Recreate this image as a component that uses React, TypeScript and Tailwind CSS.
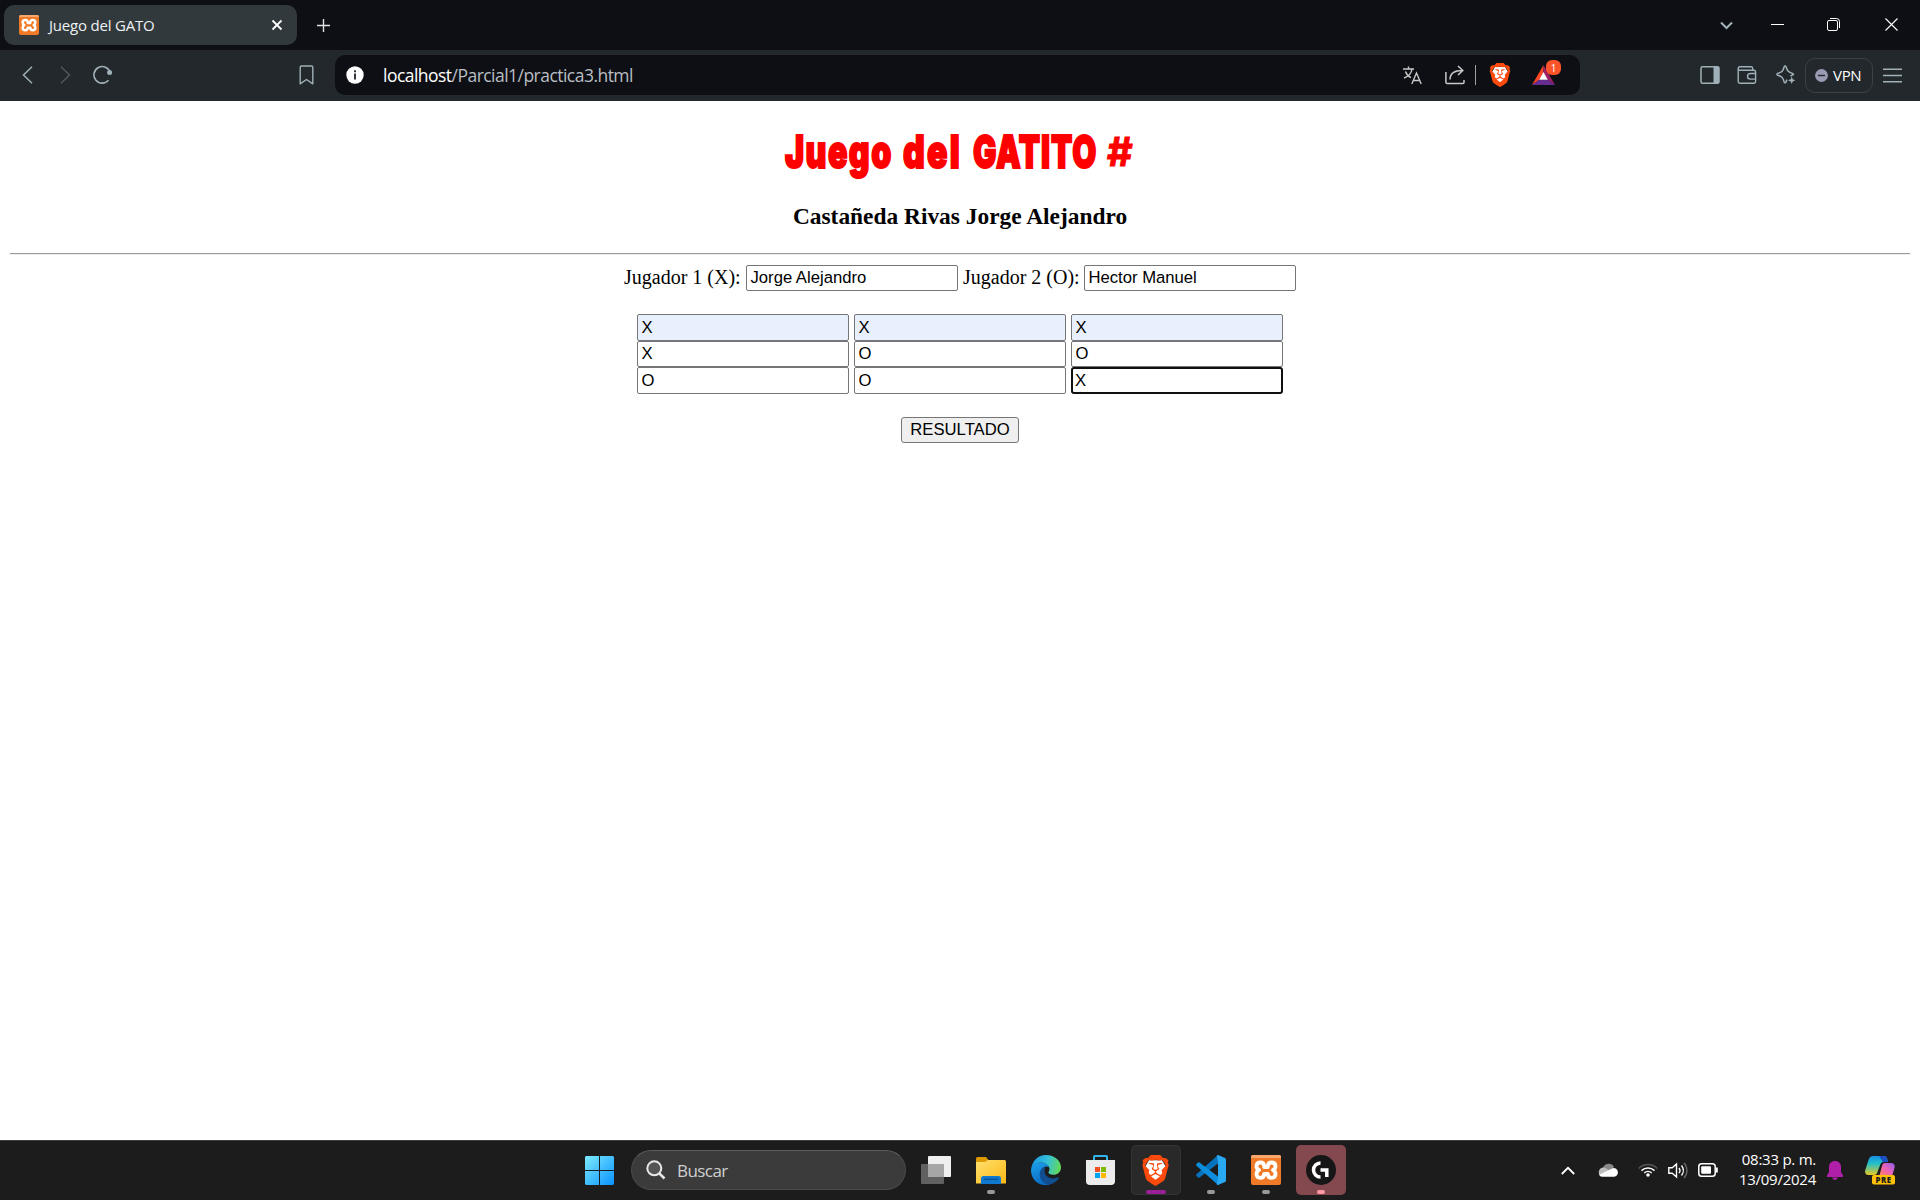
import React from "react";
import { SiBrave } from "react-icons/si";

const ui = "font-['Open_Sans','Noto_Sans',sans-serif]";

function XamppIcon({ className }: { className: string }) {
  return (
    <span className={`relative block overflow-hidden rounded-[2px] bg-[#f07a28] text-white ${className}`}>
      <span className="block h-[10%] w-full bg-[#f9a86d]" />
      <svg viewBox="0 0 30 30" className="absolute inset-0 size-full" fill="none" stroke="currentColor" strokeWidth="3.800" strokeLinejoin="round">
        <path d="M9.500 7.500c-2.500 0-4 1.500-4 3.700 0 2 1 3 2.500 3.800-1.700.8-2.500 2-2.500 4 0 2.300 1.500 3.800 4 3.800 2.800 0 3.500-1.500 3.700-3.800h3.600c.2 2.300.9 3.800 3.700 3.800 2.500 0 4-1.500 4-3.800 0-2-.8-3.200-2.500-4 1.500-.8 2.500-1.800 2.500-3.800 0-2.200-1.500-3.700-4-3.700-2.800 0-3.500 1.500-3.700 3.700v.8h-3.600v-.8c-.2-2.200-.9-3.700-3.700-3.700z" />
      </svg>
    </span>
  );
}

function BraveIcon({ className }: { className: string }) {
  return (
    <span className={`relative block ${className}`}>
      <svg viewBox="0 0 24 24" className="absolute inset-0 size-full">
        <path d="M7 4h10l3 5-2.500 8L12 21l-5.500-4L4 9z" fill="#fff" />
      </svg>
      <SiBrave className="absolute inset-0 size-full text-[#fb4a0c]" />
    </span>
  );
}

function TabStrip() {
  return (
    <div className="flex h-[50px] items-center bg-[#0d0f14] pl-1">
      <div className="flex h-10 w-[293px] items-center rounded-[10px] bg-[#32393d] pl-[15px] pr-[14px]">
        <XamppIcon className="size-5" />
        <span className="ml-[10px] grow pb-px text-[15px] leading-5 tracking-[-0.2px] whitespace-nowrap text-[#eef1f3]">Juego del GATO</span>
        <svg width="12" height="12" viewBox="0 0 12 12" stroke="#fff" strokeWidth="1.800"><path d="M1.500 1.500l9 9M10.500 1.500l-9 9" /></svg>
      </div>
      <svg className="ml-5" width="13" height="13" viewBox="0 0 13 13" stroke="#dfe3e6" strokeWidth="1.400"><path d="M6.500 0v13M0 6.500h13" /></svg>
      <div className="grow" />
      <svg className="mr-[38px]" width="13" height="9" viewBox="0 0 13 9" fill="none" stroke="#a3b2bb" strokeWidth="2"><path d="M1 1.500l5.500 5.500L12 1.500" /></svg>
      <svg className="mr-[43px]" width="13" height="13" viewBox="0 0 13 13"><path d="M0 5h13v1H0z" fill="#fff" /></svg>
      <svg className="mr-[45px] mb-px" width="13" height="13" viewBox="0 0 13 13" fill="none" stroke="#fff" strokeWidth="1"><rect x=".5" y="2.500" width="10" height="10" rx="1.500" /><path d="M3 .5h6.500a3 3 0 0 1 3 3V10" /></svg>
      <svg className="mr-[22px] mb-px" width="13" height="13" viewBox="0 0 13 13" stroke="#fff" strokeWidth="1.100"><path d="M.5.5l12 12M12.500.5l-12 12" /></svg>
    </div>
  );
}

function Toolbar() {
  return (
    <div className="flex h-[51px] items-center bg-[#22282b] pb-px pl-[22px] text-[#a0b0b8]">
      <svg width="11" height="18" viewBox="0 0 11 18" fill="none" stroke="currentColor" strokeWidth="1.500"><path d="M10 .7L1.500 9l8.500 8.300" /></svg>
      <svg className="ml-[27px] text-[#4e585d]" width="11" height="18" viewBox="0 0 11 18" fill="none" stroke="currentColor" strokeWidth="1.500"><path d="M1 .7L9.500 9 1 17.300" /></svg>
      <svg className="ml-[22px]" width="20" height="20" viewBox="0 0 20 20" fill="none" stroke="currentColor" strokeWidth="1.600"><path d="M17.200 7.500A8.300 8.300 0 1 0 15.500 15.300" /><circle cx="16.600" cy="7.600" r="2.500" fill="currentColor" stroke="none" /></svg>
      <svg className="ml-[186px]" width="15" height="20" viewBox="0 0 15 20" fill="none" stroke="currentColor" strokeWidth="1.400" strokeLinejoin="round"><path d="M2.500 1h10c.8 0 1.300.5 1.300 1.300v16.500L7.500 14.500l-6.300 4.300V2.300C1.200 1.500 1.700 1 2.500 1z" /></svg>
      <div className="ml-[21px] flex h-10 w-[1245px] items-center rounded-[10px] bg-[#0d0f14] pl-[11px] pr-[25px]">
        <svg width="18" height="18" viewBox="0 0 18 18"><circle cx="9" cy="9" r="8.700" fill="#fff" /><path d="M8 4.200h2v2H8zM8 7.500h2v6H8z" fill="#33383c" /></svg>
        <span className="ml-[19px] grow pb-px text-[17.500px] leading-6 tracking-[-0.53px] whitespace-nowrap text-[#b9bec3]"><span className="text-white">localhost</span>/Parcial1/practica3.html</span>
        <svg width="19" height="19" viewBox="0 0 19 19" fill="none" stroke="#c8c8c8" strokeWidth="1.400"><path d="M0 3h11M5.500.5V3M9 3c-.5 4-4 7.500-8 9M2.500 5.500c1 3 3 5 5.500 6.200M8.800 18l4.700-11 4.700 11M10.300 14.500h6.400" /></svg>
        <svg className="ml-[23px]" width="20" height="20" viewBox="0 0 20 20" fill="none" stroke="#c8c8c8" strokeWidth="1.500"><path d="M.9 7v10.300c0 .8.500 1.300 1.300 1.300h15.600c.8 0 1.200-.5 1.200-1.300V15M5 14.500c0-5.500 3.500-9 12.500-9M13 1l4.800 4.500L13 10" /></svg>
        <span className="ml-[10px] h-5 w-px bg-[#a0a0a0]" />
        <BraveIcon className="ml-[12px] size-[24px]" />
        <span className="relative ml-[20px] block h-5 w-[23px]">
          <svg width="23" height="20" viewBox="0 0 23 20"><path d="M11.500 0L0 20l7.500-5.500 4-7z" fill="#ff4724" /><path d="M11.500 0L23 20l-7.500-5.500-4-7z" fill="#9e1f63" /><path d="M0 20h23l-7.500-5.500h-8z" fill="#662d91" /><path d="M11.500 7l4.300 7.700H7.200z" fill="#fff" /></svg>
          <span className="absolute -top-[5px] left-[14px] flex h-[15px] w-[15px] items-center justify-center rounded-[6px] bg-[#fb542b] text-[10px] leading-none text-white">1</span>
        </span>
      </div>
      <div className="ml-[120px] flex items-center">
        <svg width="20" height="20" viewBox="0 0 20 20" fill="none" stroke="currentColor" strokeWidth="1.500"><rect x="1" y="1.700" width="18" height="16.500" rx="1.500" /><path d="M13.500 2h5.500v16h-5.500z" fill="currentColor" stroke="none" /></svg>
        <svg className="ml-[17px]" width="20" height="20" viewBox="0 0 20 20" fill="none" stroke="currentColor" strokeWidth="1.400"><path d="M1.200 3.500v13c0 1 .7 1.700 1.700 1.700h14c1 0 1.700-.7 1.700-1.700V7c0-1-.7-1.700-1.700-1.700H3C2 5.300 1.200 4.500 1.200 3.500S2 1.800 3 1.800h11c1 0 1.700.7 1.700 1.700v1.800M18.700 8.500h-5.200c-1.800 0-3 1.200-3 2.800s1.200 2.800 3 2.800h5.200" /></svg>
        <svg className="ml-[19px]" width="20" height="20" viewBox="0 0 20 20" fill="none" stroke="currentColor" strokeWidth="1.500" strokeLinejoin="round"><path d="M14.500 11.300c.9-.9 2-1.400 3-1.900 0-.6-.4-.8-1-1C12.500 7.200 11.300 6 10 1.700 9.700.7 8.500.7 8.200 1.700 7 6 6 7.200 1.700 8.400c-1 .3-1 1.500 0 1.800C6 11.500 7 12.500 8.200 17c.3 1 1.500 1 1.800 0 .3-1 .6-1.700 1-2.300" /><path d="M15.700 11.500l1 2.700 2.700 1.100-2.700 1.100-1 2.700-1-2.700-2.700-1.100 2.700-1.100z" fill="currentColor" stroke="none" /></svg>
      </div>
      <div className="ml-[9px] flex h-[35px] w-[68px] items-center rounded-[10px] border border-[#3a4246] pl-[9px]">
        <svg width="13" height="13" viewBox="0 0 13 13"><circle cx="6.500" cy="6.500" r="6.400" fill="#9a9ab2" /><path d="M3 5.800h7v1.400H3z" fill="#22282b" /></svg>
        <span className="ml-[5px] text-[15px] leading-5 tracking-[-0.3px] text-white">VPN</span>
      </div>
      <svg className="ml-[10px]" width="19" height="15" viewBox="0 0 19 15" fill="currentColor"><path d="M0 .6h19v1.400H0zM0 6.800h19v1.400H0zM0 13h19v1.400H0z" /></svg>
    </div>
  );
}

function Field({ value, fill = "", focused = false }: { value: string; fill?: string; focused?: boolean }) {
  const edge = focused ? "rounded-[3px] border-2 border-[#101010] pl-[2px]" : "rounded-[2px] border border-[#767676] pl-[3.500px]";
  return (
    <div className={`flex w-[212px] items-center font-['Liberation_Sans',Arial,sans-serif] text-[16.670px] leading-5 whitespace-nowrap ${edge} ${fill}`}>
      {value}
    </div>
  );
}

function GamePage() {
  return (
    <main className="flex h-[1039px] flex-col items-center bg-white pt-[26px] font-['Liberation_Serif','Times_New_Roman',serif] text-black">
      <h1 className="flex h-[50px] w-[350px] items-center font-['Inter',sans-serif] text-[45px] leading-[50px] font-black whitespace-nowrap text-[#ff0000] [-webkit-text-stroke:2px_#ff0000]">
        <span className="w-[118px]"><span className="inline-block origin-left scale-x-[0.715] tracking-[2px]">Juego</span></span>
        <span className="w-[70px]"><span className="inline-block origin-left scale-x-[0.75] tracking-[3px]">del</span></span>
        <span className="w-[134px]"><span className="inline-block origin-left scale-x-[0.69] tracking-[1.300px]">GATITO</span></span>
        <span className="w-[28px] text-[39px] [-webkit-text-stroke-width:1px]"><span className="inline-block origin-left scale-x-[1.02] font-bold">#</span></span>
      </h1>
      <h3 className="mt-[25px] text-[23.400px] leading-7 font-bold whitespace-nowrap">Castañeda Rivas Jorge Alejandro</h3>
      <div className="mt-[23px] h-[2px] w-[1900px] border-t border-b border-t-[#9a9a9a] border-b-[#eeeeee]" />
      <div className="mt-[10px] flex h-[26px] w-[672px] text-[20px]">
        <span className="w-[122px] shrink-0 leading-6 whitespace-nowrap">Jugador 1 (X):</span>
        <Field value="Jorge Alejandro" />
        <span className="w-[126px] shrink-0 pl-[5px] leading-6 whitespace-nowrap">Jugador 2 (O):</span>
        <Field value="Hector Manuel" />
      </div>
      <div className="mt-[23px] grid grid-cols-[212px_212px_212px] grid-rows-[27px_26px_27px] gap-x-[5px]">
        <Field value="X" fill="bg-[#e8f0fe]" />
        <Field value="X" fill="bg-[#e8f0fe]" />
        <Field value="X" fill="bg-[#e8f0fe]" />
        <Field value="X" />
        <Field value="O" />
        <Field value="O" />
        <Field value="O" />
        <Field value="O" />
        <Field value="X" focused />
      </div>
      <button className="mt-[23px] flex h-[26px] w-[118px] items-center justify-center rounded-[3px] border border-[#767676] bg-[#efefef] font-['Liberation_Sans',Arial,sans-serif] text-[16.670px] leading-5">RESULTADO</button>
    </main>
  );
}

function Task({ children, mark = "", tile = "" }: { children: React.ReactNode; mark?: string; tile?: string }) {
  return (
    <div className={`relative flex size-[50px] items-center justify-center rounded-[5px] ${tile}`}>
      {children}
      {mark && <span className={`absolute top-[45px] h-1 rounded-full ${mark}`} />}
    </div>
  );
}

function Taskbar() {
  return (
    <footer className="flex h-[60px] items-center border-t border-[#3d3d3d] bg-[#1c1c1c] pb-px">
      <div className="ml-[585px]">
        <svg width="29" height="29" viewBox="0 0 29 29">
          <defs><linearGradient id="win" x1="0" y1="0" x2="29" y2="29" gradientUnits="userSpaceOnUse"><stop stopColor="#7cebff" /><stop offset="1" stopColor="#0a92ff" /></linearGradient></defs>
          <path fill="url(#win)" d="M1 0h13v14H0V1zM15 0h13l1 1v13H15zM0 15h14v14H1l-1-1zM15 15h14v13l-1 1H15z" />
        </svg>
      </div>
      <div className="ml-[17px] flex h-10 w-[275px] items-center rounded-full border border-[#4a4a4a] border-t-[#5c5c5c] bg-[#3b3b3b] pl-[14px]">
        <svg width="20" height="20" viewBox="0 0 20 20" fill="#555" stroke="#e8e8e8" strokeWidth="2"><circle cx="8.300" cy="8.300" r="7" /><path d="M13.300 13.300L18.500 18.500" strokeWidth="2.500" /></svg>
        <span className="ml-[11px] pt-px text-[17px] leading-6 tracking-[-0.55px] text-[#cfcfcf]">Buscar</span>
      </div>
      <div className="ml-[5px] flex gap-[5px]">
        <Task>
          <svg width="30" height="28" viewBox="0 0 30 28"><rect x="7" width="23" height="21" rx="1" fill="#efefef" /><rect y="8" width="23" height="20" rx="1" fill="#6d6d6d" fillOpacity=".85" /><path d="M7 8h16v13H7z" fill="#a6a6a6" /></svg>
        </Task>
        <Task mark="w-2 bg-[#999]">
          <svg width="30" height="27" viewBox="0 0 30 27">
            <defs><linearGradient id="fold" x1="0" y1="0" x2="1" y2="1"><stop stopColor="#ffdf6f" /><stop offset="1" stopColor="#fbb914" /></linearGradient></defs>
            <path d="M0 1.500Q0 0 1.500 0H10l3 3.500L10 9H0z" fill="#dd9a05" /><path d="M0 5h9l3-2h16.500Q30 3 30 4.500V26.500H0z" fill="url(#fold)" /><path d="M5 27v-5.500q0-2.500 2.500-2.500h15q2.500 0 2.500 2.500V27z" fill="#0f78cf" /><path d="M8 22.300h14" stroke="#0a4f93" strokeWidth="1.300" />
          </svg>
        </Task>
        <Task>
          <svg width="30" height="30" viewBox="0 0 30 30">
            <defs>
              <linearGradient id="edgeTop" x1="2" y1="8" x2="29" y2="14" gradientUnits="userSpaceOnUse"><stop stopColor="#1b9de2" /><stop offset=".5" stopColor="#35c1d8" /><stop offset="1" stopColor="#63d957" /></linearGradient>
              <linearGradient id="edgeBody" x1="4" y1="9" x2="14" y2="30" gradientUnits="userSpaceOnUse"><stop stopColor="#1a9be8" /><stop offset="1" stopColor="#0967c0" /></linearGradient>
            </defs>
            <path d="M.3 14C1 6 7 0 15 0c8.500 0 15 5.700 15 12.500 0 4.500-3.500 7.300-7.600 7.300-3.300 0-5-1-5-2.200 0-.9 1.100-1.300 1.100-3.600C18.500 10.500 14.500 7.500 10 7.500 5 7.500 1.500 10.500.3 14z" fill="url(#edgeTop)" />
            <path d="M0 15C.4 10.700 4.400 7.500 9.500 7.500c4.500 0 7.500 2 8.700 4.500-5-2-8.700 1.600-8.700 6.500 0 5 3.500 9.500 9.500 11C9 32.500 0 25.500 0 15z" fill="url(#edgeBody)" />
            <path d="M14.500 11.700C11.500 12.500 8.700 15 8.700 19.500c0 6 5 10.500 9.700 10 4-.6 7.500-3 9.500-6.500.3-.6-.2-1-.8-.7-5.600 2.800-13.600 0-13.600-6.300 0-1.800.6-3.300 1-4.300z" fill="#104d91" />
          </svg>
        </Task>
        <Task>
          <svg className="mr-px" width="29" height="30" viewBox="0 0 29 30"><path d="M8 6V1.800q0-.8.8-.8h11.400q.8 0 .8.800V6" fill="none" stroke="#31b5ee" strokeWidth="2" /><path d="M0 5h29v21q0 4-4 4H4q-4 0-4-4z" fill="#ececec" /><path d="M9 12h5v5H9z" fill="#f25022" /><path d="M15 12h5v5h-5z" fill="#7fba00" /><path d="M9 18h5v5H9z" fill="#00a4ef" /><path d="M15 18h5v5h-5z" fill="#ffb900" /></svg>
        </Task>
        <Task tile="bg-[#292929] outline outline-[#333] -outline-offset-1" mark="w-5 bg-[#9b1f9b]"><BraveIcon className="mr-px size-[31px]" /></Task>
        <Task mark="w-2 bg-[#999]">
          <svg width="30" height="30" viewBox="0 0 30 30"><path d="M22 0v8.500L3.500 22.500q-.8.500-1.500 0L.5 21q-.8-1 0-1.800z" fill="#0873bd" /><path d="M22 30v-8.500L3.500 7.500Q2.700 7 2 7.500L.5 9q-.8 1 0 1.800z" fill="#0d8ddb" /><path d="M22 0q-.7 0-1.200.6L22 7v16l-1.200 6.400q.5.6 1.200.6l7-3q1-.5 1-1.500v-21q0-1-1-1.500z" fill="#29a9f2" /></svg>
        </Task>
        <Task mark="w-2 bg-[#999]"><XamppIcon className="size-[30px]" /></Task>
        <Task tile="bg-[#84484f]" mark="w-2 bg-[#ff9aa5]">
          <svg width="30" height="30" viewBox="0 0 30 30"><circle cx="15" cy="15" r="15" fill="#161616" /><path d="M14.500 8A7 7 0 0 0 14.500 22M14.500 15h6.300v7" fill="none" stroke="#fff" strokeWidth="3.500" /></svg>
        </Task>
      </div>
      <div className="grow" />
      <svg className="mr-[23px]" width="14" height="9" viewBox="0 0 14 9" fill="none" stroke="#fff" strokeWidth="1.800"><path d="M.8 8L7 1.800 13.200 8" /></svg>
      <svg className="mr-[20px] mb-px" width="20" height="14" viewBox="0 0 20 14"><path d="M5 5a6 6 0 0 1 11-1l-6 5z" fill="#888" /><path d="M5 4.500c2 0 4 1 9 5L3 13.500C-.5 12 0 5 5 4.500z" fill="#bdbdbd" /><path d="M16 5c5 .5 5.500 8.500 0 8.700H4.500c-1.500 0-2.700-.8-3.300-2L13 6q1.500-1 3-1z" fill="#fff" /></svg>
      <svg className="mr-[10px] mb-px" width="20" height="15" viewBox="0 0 20 15" fill="none" stroke="#fff" strokeWidth="1.500"><path d="M.7 6.500a13 13 0 0 1 18.600 0" stroke="#555" /><path d="M3.500 8.600a9.500 9.500 0 0 1 13 0M6.300 11a5.500 5.500 0 0 1 7.400 0" /><circle cx="10" cy="13" r="1.800" fill="#fff" stroke="none" /></svg>
      <svg className="mr-[10px]" width="20" height="17" viewBox="0 0 20 17" fill="none" stroke="#fff" strokeWidth="1.400"><path d="M.8 5.800h3.400L8.500 2v13L4.200 11.300H.8zM11 6a4 4 0 0 1 0 5M13.500 3.500a8 8 0 0 1 0 10" /><path d="M16 1a11 11 0 0 1 0 15" stroke="#666" /></svg>
      <svg width="20" height="14" viewBox="0 0 20 14" fill="none" stroke="#fff" strokeWidth="1.500"><rect x=".8" y=".8" width="16.400" height="12.400" rx="2.800" /><rect x="3.200" y="3.200" width="9.800" height="7.600" rx="1" fill="#fff" stroke="none" /><path d="M18.800 4.500v5" strokeWidth="2" /></svg>
      <div className="ml-[18px] w-[80px] pb-[3px] text-right text-[15px] leading-5 tracking-[-0.25px] whitespace-nowrap text-white"><div>08:33 p. m.</div><div>13/09/2024</div></div>
      <svg className="ml-[11px]" width="16" height="19" viewBox="0 0 16 19" fill="#b01fa8"><path d="M8 0c3.800 0 6 2.500 6 6v5l2 3.500V16H0v-1.500L2 11V6c0-3.500 2.200-6 6-6zM5.200 16.500h5.600C10.500 18 9.500 19 8 19s-2.500-1-2.800-2.500z" /></svg>
      <svg className="mr-[25px] ml-[22px]" width="30" height="29" viewBox="0 0 30 29">
        <defs><linearGradient id="copA" x1="0" y1="0" x2="0" y2="1"><stop stopColor="#168fe0" /><stop offset=".4" stopColor="#22c0c8" /><stop offset="1" stopColor="#e9c823" /></linearGradient><linearGradient id="copB" x1="1" y1="0" x2="0" y2="1"><stop stopColor="#8d5cf0" /><stop offset=".5" stopColor="#ef63b5" /><stop offset="1" stopColor="#ff8a4c" /></linearGradient></defs>
        <path d="M8 0h11c2 0 2.700 1 3.200 3l.8 3h-5q-2 0-2.700 2.500L12.500 16q-.7 3-3.500 3H3.500C.5 19-.5 17 .3 14L3.500 4Q4.700 0 8 0z" fill="url(#copA)" />
        <path d="M14 0h5c2 0 2.700 1 3.200 3l.8 3h-5z" fill="#1c4fc4" />
        <path d="M19.500 7H26c3 0 4.300 2 3.500 5l-2.700 9H14l3-11q.7-3 2.500-3z" fill="url(#copB)" />
        <rect x="7" y="19" width="23" height="9.500" rx="2" fill="#ffc107" />
        <text x="18.500" y="26.500" textAnchor="middle" fontSize="7.800" fontWeight="800" letterSpacing=".5" fill="#1b1b1b">PRE</text>
      </svg>
    </footer>
  );
}

export default function App() {
  return (
    <div className={`flex h-[1200px] w-[1920px] flex-col overflow-hidden ${ui}`}>
      <TabStrip />
      <Toolbar />
      <GamePage />
      <Taskbar />
    </div>
  );
}
